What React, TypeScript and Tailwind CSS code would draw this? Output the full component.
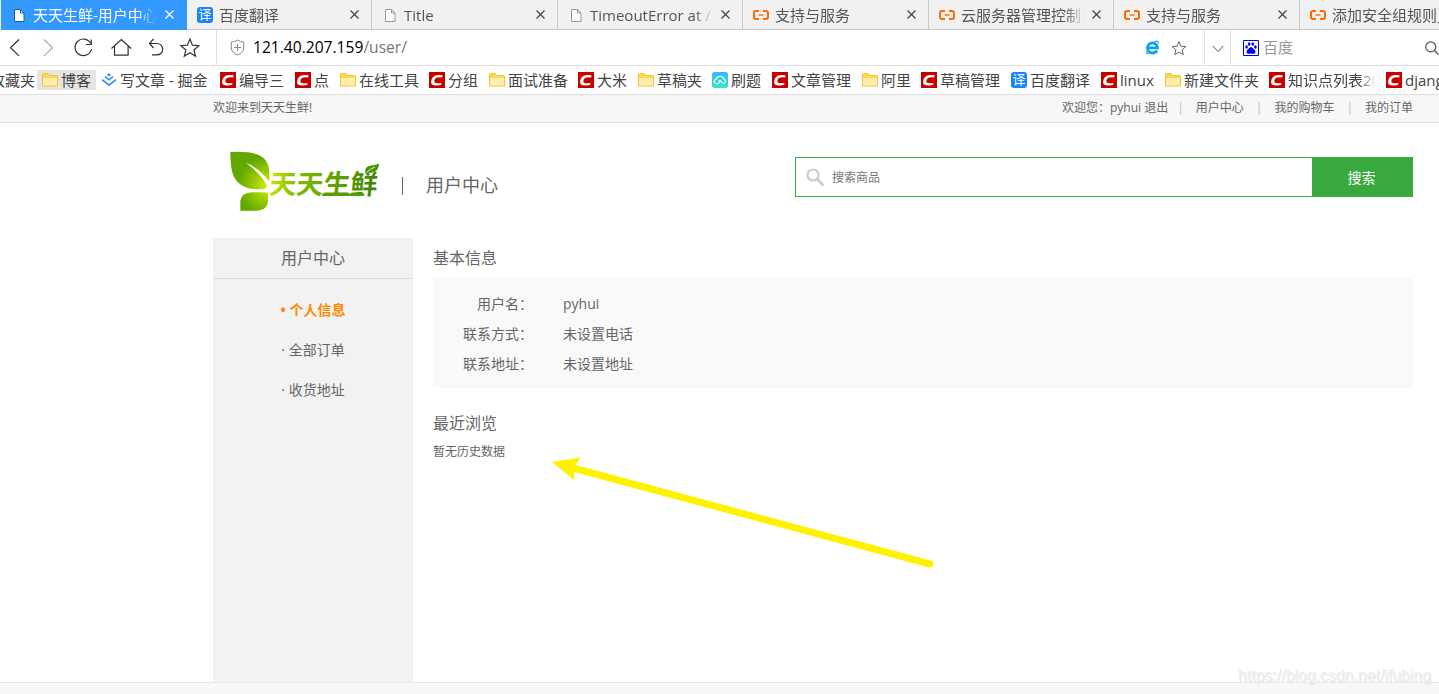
import type { ReactNode } from "react";
import clsx from "clsx";

const FileIcon = ({ active }: { active?: boolean }) => (
  <svg width="16" height="16" viewBox="0 0 16 16" className="shrink-0">
    <path
      d="M3.5 2.5h6l3.5 3.5v8.5h-9.5z"
      fill={active ? "#fff" : "#fafafa"}
      stroke={active ? "#1d5c9c" : "#999"}
    />
    <path d="M9.5 2.5v3.5h3.5" fill="none" stroke={active ? "#1d5c9c" : "#999"} />
  </svg>
);

const TranslateIcon = () => (
  <span className="w-4 h-4 shrink-0 rounded-[3px] bg-[#1a84fa] text-white text-[13px] leading-[15px] text-center overflow-hidden">
    译
  </span>
);

const CloudIcon = () => (
  <svg width="16" height="16" viewBox="0 0 16 16" fill="none" stroke="#ff6a00" className="shrink-0">
    <path d="M6 4H3.2Q1 4 1 6.2v3.6Q1 12 3.2 12H6M10 4h2.8Q15 4 15 6.2v3.6Q15 12 12.8 12H10" strokeWidth="2" />
    <path d="M5.5 8h5" strokeWidth="1.4" />
  </svg>
);

const FolderIcon = () => (
  <svg width="16" height="16" viewBox="0 0 16 16" className="shrink-0">
    <path d="M.5 14V2.5Q.5 1.5 1.5 1.5H6l1.5 2h7q1 0 1 1V14z" fill="#ffd84d" stroke="#f5c02c" />
    <path d="M1 6h14v7.5H1z" fill="#ffeeaf" />
  </svg>
);

const CsdnIcon = () => (
  <svg width="16" height="16" viewBox="0 0 16 16" className="shrink-0">
    <path d="M0 0h16v16H0z" fill="#c80000" />
    <path
      d="M13.6 3.2l-.5 2.300Q7.200 4.500 5.800 7.200 4.500 10.700 7 11q2.500.4 5.500-.1l-.5 2.200q-4 .6-6.800.2Q.8 12.500 2.600 7.200 4.500 1.800 13.600 3.200z"
      fill="#fff"
    />
  </svg>
);

const JuejinIcon = () => (
  <svg width="16" height="16" viewBox="0 0 16 16" fill="none" stroke="#2f8cf5" strokeWidth="1.5" className="shrink-0">
    <path d="M8 1.2l2 1.6-2 1.7-2-1.7z" fill="#2f8cf5" stroke="none" />
    <path d="M4 4.6l4 3.2 4-3.2M1 7.6l7 5.6 7-5.6" />
  </svg>
);

const ShuatiIcon = () => (
  <svg width="16" height="16" viewBox="0 0 16 16" className="shrink-0">
    <defs>
      <linearGradient id="shuati" x1="0" y1="0" x2="0" y2="1">
        <stop offset="0" stopColor="#36b8f8" />
        <stop offset="1" stopColor="#36e8c0" />
      </linearGradient>
    </defs>
    <rect width="16" height="16" rx="2.5" fill="url(#shuati)" />
    <path
      d="M7 11.500H4.500a2.200 2.200 0 01-.2-4.400 3.800 3.800 0 017.300-.2 2.400 2.400 0 01.2 4.600q-1.500 0-2.300-1.500-.8-1.700-1.800-1.300-1.400.7-.2 2.100"
      fill="none"
      stroke="#fff"
      strokeWidth="1.1"
    />
  </svg>
);

const BaiduIcon = () => (
  <svg width="16" height="16" viewBox="0 0 16 16" fill="#0000f0" className="shrink-0">
    <path d="M.5.5h15v15H.5z" fill="#fff" stroke="#0000f0" />
    <ellipse cx="3.6" cy="7" rx="1.3" ry="1.8" />
    <ellipse cx="6.2" cy="4.1" rx="1.3" ry="1.8" />
    <ellipse cx="9.8" cy="4.1" rx="1.3" ry="1.8" />
    <ellipse cx="12.4" cy="7" rx="1.3" ry="1.8" />
    <path d="M8 7q1.2 0 2.2 1.6 2.6 1.8 2.3 3.6-.5 2-2.6 1.5-1.9-.4-3.8 0-2.1.4-2.6-1.5-.3-1.8 2.3-3.6Q6.800 7 8 7z" />
  </svg>
);

const CloseIcon = ({ active }: { active?: boolean }) => (
  <svg width="9" height="9" viewBox="0 0 9 9" stroke={active ? "#fff" : "#444"} strokeWidth="1.2" className="shrink-0">
    <path d="M.5.5l8 8M8.500.5l-8 8" />
  </svg>
);

type TabProps = { icon: ReactNode; title: string; width: string; active?: boolean };

const Tab = ({ icon, title, width, active }: TabProps) => (
  <div
    className={clsx(
      "h-[30px] shrink-0 flex items-center pl-[10px] pr-[12px] text-[15px] border-r border-b",
      width,
      active ? "bg-[#3399ff] text-white border-[#3399ff]" : "text-[#555] border-[#c8c8c8]"
    )}
  >
    {icon}
    <span className="ml-[6px] w-[124px] overflow-hidden whitespace-nowrap leading-7 [mask-image:linear-gradient(to_right,#000_104px,transparent_124px)]">
      {title}
    </span>
    <span className="ml-auto">
      <CloseIcon active={active} />
    </span>
  </div>
);

const tabs: TabProps[] = [
  { icon: <FileIcon active />, title: "天天生鲜-用户中心", width: "w-[186px]", active: true },
  { icon: <TranslateIcon />, title: "百度翻译", width: "w-[185px]" },
  { icon: <FileIcon />, title: "Title", width: "w-[186px]" },
  { icon: <FileIcon />, title: "TimeoutError at /", width: "w-[185px]" },
  { icon: <CloudIcon />, title: "支持与服务", width: "w-[186px]" },
  { icon: <CloudIcon />, title: "云服务器管理控制台", width: "w-[185px]" },
  { icon: <CloudIcon />, title: "支持与服务", width: "w-[186px]" },
  { icon: <CloudIcon />, title: "添加安全组规则_", width: "w-[186px]" },
];

const bookmarks = [
  { icon: <FolderIcon />, title: "博客", width: "w-[59px]", active: true },
  { icon: <JuejinIcon />, title: "写文章 - 掘金", width: "w-[119px]" },
  { icon: <CsdnIcon />, title: "编导三", width: "w-[75px]" },
  { icon: <CsdnIcon />, title: "点", width: "w-[45px]" },
  { icon: <FolderIcon />, title: "在线工具", width: "w-[89px]" },
  { icon: <CsdnIcon />, title: "分组", width: "w-[60px]" },
  { icon: <FolderIcon />, title: "面试准备", width: "w-[89px]" },
  { icon: <CsdnIcon />, title: "大米", width: "w-[60px]" },
  { icon: <FolderIcon />, title: "草稿夹", width: "w-[74px]" },
  { icon: <ShuatiIcon />, title: "刷题", width: "w-[60px]" },
  { icon: <CsdnIcon />, title: "文章管理", width: "w-[90px]" },
  { icon: <FolderIcon />, title: "阿里", width: "w-[59px]" },
  { icon: <CsdnIcon />, title: "草稿管理", width: "w-[90px]" },
  { icon: <TranslateIcon />, title: "百度翻译", width: "w-[90px]" },
  { icon: <CsdnIcon />, title: "linux", width: "w-[64px]" },
  { icon: <FolderIcon />, title: "新建文件夹", width: "w-[104px]" },
  { icon: <CsdnIcon />, title: "知识点列表20", width: "w-[117px]", fade: true },
  { icon: <CsdnIcon />, title: "django", width: "w-[80px]" },
];

const Toolbar = () => (
  <div className="h-9 flex items-center bg-white border-b border-[#e0e0e0]">
    <div className="w-[217px] h-full shrink-0 border-r border-[#e0e0e0]">
      <svg width="216" height="35" viewBox="0 30 216 35" fill="none" stroke="#333" strokeWidth="1.2">
        <path d="M19 39.500l-8.500 8.200 8.500 8.200" />
        <path d="M44 39.500l8.500 8.200-8.500 8.200" stroke="#aaa" />
        <path d="M90.600 43.200a8.300 8.300 0 10.900 5.800M91.300 39.500v5h-5.500" />
        <path d="M111.500 48.500l9.800-9 9.800 9M114.500 46.500v8.700h13.600v-8.700" />
        <path d="M153.500 39l-4 4.500 4 4.500M149.500 43.500h7.500a5.700 5.700 0 010 11.400h-5" />
        <path d="M189.900 39l2.500 6.200 6.500.5-5 4.300 1.600 6.300-5.600-3.500-5.600 3.500 1.600-6.300-5-4.300 6.500-.5z" />
      </svg>
    </div>
    <div className="w-[987px] h-full flex items-center pl-[13px] pr-[17px]">
      <svg width="15" height="17" viewBox="0 0 15 17" fill="none" stroke="#888" className="shrink-0">
        <path d="M7.500 1q3 2 6.200 2v6q0 4.500-6.200 7-6.200-2.500-6.200-7v-6q3.200 0 6.200-2zM7.500 5v7M4 8.500h7" />
      </svg>
      <span className="ml-2 text-[15.6px] text-black">
        121.40.207.159<span className="text-[#777]">/user/</span>
      </span>
      <svg width="15" height="15" viewBox="0 0 15 15" fill="none" className="ml-auto">
        <path d="M4 7.800h8.500A5 5 0 107.500 13q3.200 0 4.500-2.600" stroke="#10a0f0" strokeWidth="2.8" />
        <path d="M9.500 1.800q4-1.800 4 1.400M2.500 10q-2 4 1 3.600" stroke="#10a0f0" strokeWidth="1.2" />
      </svg>
      <svg width="16" height="16" viewBox="0 0 16 16" fill="none" stroke="#666" strokeWidth="1" className="ml-[11px]">
        <path d="M8 1.500l1.900 4.700 4.900.4-3.700 3.200 1.200 4.900L8 12.100l-4.300 2.600 1.200-4.900-3.700-3.200 4.900-.4z" />
      </svg>
    </div>
    <div className="w-[27px] h-full flex items-center justify-center border-x border-[#e0e0e0]">
      <svg width="12" height="8" viewBox="0 0 12 8" fill="none" stroke="#555" className="mt-0.5">
        <path d="M.8 1L6 6.500 11.200 1" />
      </svg>
    </div>
    <div className="flex-1 h-full flex items-center pl-3">
      <BaiduIcon />
      <span className="ml-1 text-[15px] text-[#999]">百度</span>
      <svg width="14" height="14" viewBox="0 0 14 14" fill="none" stroke="#555" strokeWidth="1.2" className="ml-auto">
        <circle cx="5.8" cy="5.8" r="5" />
        <path d="M9.500 9.500l4 4" />
      </svg>
    </div>
  </div>
);

const Bookmarks = () => (
  <div className="h-[29px] flex items-center bg-white border-b border-[#e0e0e0] text-[15px] text-[#444] overflow-hidden">
    <span className="w-[37px] shrink-0 flex justify-end whitespace-nowrap pr-[2px]">收藏夹</span>
    {bookmarks.map((b, i) => (
      <div
        key={i}
        className={clsx("h-5 shrink-0 flex items-center gap-1 px-[5px] whitespace-nowrap", b.width, b.active && "bg-[#e5e5e5]")}
      >
        {b.icon}
        <span
          className={clsx(
            "leading-5 -ml-px",
            b.fade && "w-[88px] overflow-hidden [mask-image:linear-gradient(to_right,#000_72px,transparent_88px)]"
          )}
        >
          {b.title}
        </span>
      </div>
    ))}
  </div>
);

const Logo = () => (
  <svg width="152" height="62" viewBox="0 0 152 62">
    <defs>
      <radialGradient id="leaf" gradientUnits="userSpaceOnUse" cx="38" cy="35" r="30">
        <stop offset="0" stopColor="#dcf000" />
        <stop offset=".45" stopColor="#9ccf00" />
        <stop offset="1" stopColor="#62a800" />
      </radialGradient>
      <linearGradient id="word" gradientUnits="userSpaceOnUse" x1="40" y1="0" x2="150" y2="0">
        <stop offset="0" stopColor="#c4e400" />
        <stop offset=".25" stopColor="#7cbc00" />
        <stop offset="1" stopColor="#3c8200" />
      </linearGradient>
    </defs>
    <path
      d="M.3 1Q10 .5 18 1.300 35 3 38.500 15q1.200 6 .8 15.500Q30 17.500 15.500 11.500 28.500 20.500 37.300 34.500l-2.300 3.200Q24 39 17.500 37 8 33.500 4 26 .3 19 .3 1z"
      fill="url(#leaf)"
    />
    <path d="M37.700 41.500q1.300 12-2 14.500-3 4-11.500 3.800H10.300V50q1-8.500 12-8.800z" fill="url(#leaf)" />
    <text
      x="39"
      y="43"
      fontSize="27"
      fontWeight="700"
      textLength="108"
      lengthAdjust="spacingAndGlyphs"
      fill="url(#word)"
      transform="skewX(-6) translate(4 0)"
    >
      天天生鲜
    </text>
    <path d="M92.500 42.500h42l-.5 2.500H92z" fill="#569c00" />
    <path d="M135.300 21.700q-1-7 6.500-7.200l7.500-1.700q-1.500 9.500-9.500 9l-3.500 2z" fill="#4a9408" />
    <path d="M136.500 21.500q4-4 8.500-5.500" fill="none" stroke="#fff" strokeWidth=".8" />
  </svg>
);

const info = [
  { label: "用户名：", value: "pyhui" },
  { label: "联系方式：", value: "未设置电话" },
  { label: "联系地址：", value: "未设置地址" },
];

const Divider = () => <span className="text-[#bbb]">|</span>;

export default function App() {
  return (
    <div className="relative w-[1439px] h-[694px] overflow-hidden flex flex-col bg-white text-[#666] font-['Open_Sans','Noto_Sans_CJK_SC',sans-serif]">
      <div className="h-[30px] shrink-0 flex pl-px bg-[#f1f1f1] overflow-hidden">
        {tabs.map((tab, i) => (
          <Tab key={i} {...tab} />
        ))}
      </div>
      <Toolbar />
      <Bookmarks />

      <div className="h-7 shrink-0 flex justify-between items-center pl-[213px] pr-[26px] pb-0.5 bg-[#f7f7f7] border-b border-[#ddd] text-xs whitespace-nowrap">
        <span>欢迎来到天天生鲜!</span>
        <div className="flex">
          <span className="mr-[9px]">欢迎您：pyhui 退出</span>
          <Divider />
          <span className="mx-3">用户中心</span>
          <Divider />
          <span className="mx-3">我的购物车</span>
          <Divider />
          <span className="ml-3">我的订单</span>
        </div>
      </div>

      <header className="h-[115px] shrink-0 flex items-start pl-[230px] pr-[26px] pt-7">
        <Logo />
        <div className="mt-[21px] ml-[20px] flex items-center text-lg leading-5 whitespace-nowrap">
          <span className="w-px h-[18px] mt-1 bg-[#666]" />
          <span className="ml-[23px] mt-[3px]">用户中心</span>
        </div>
        <div className="ml-auto mt-[6px] w-[618px] h-10 flex">
          <div className="flex-1 flex items-center border border-r-0 border-[#38aa3f] pl-2.5 text-xs text-[#757575]">
            <svg width="19" height="19" viewBox="0 0 19 19" fill="none" stroke="#ccc">
              <circle cx="7" cy="7" r="5.5" strokeWidth="2.2" />
              <path d="M11.500 11.500l6 6" strokeWidth="2.8" />
            </svg>
            <span className="ml-[7px] mt-0.5">搜索商品</span>
          </div>
          <button className="w-[101px] pr-[2px] pt-0.5 bg-[#38aa3f] text-white text-sm">搜索</button>
        </div>
      </header>

      <main className="h-[444px] shrink-0 flex pl-[213px] pr-[26px]">
        <aside className="w-[200px] bg-[#f2f2f2] text-sm">
          <h3 className="h-[41px] leading-[40px] text-center text-base border-b border-[#ddd]">用户中心</h3>
          <ul className="mt-[11px] text-center leading-10">
            <li className="text-[#ff8800] font-bold">• 个人信息</li>
            <li>· 全部订单</li>
            <li>· 收货地址</li>
          </ul>
        </aside>
        <section className="ml-5 flex-1">
          <h3 className="h-10 leading-10 text-base">基本信息</h3>
          <ul className="h-[110px] bg-[#f9f9f9] pt-[11px] text-sm">
            {info.map((row) => (
              <li key={row.label} className="h-[30px] leading-[30px] flex">
                <span className="w-[100px] text-right">{row.label}</span>
                <span className="ml-[30px]">{row.value}</span>
              </li>
            ))}
          </ul>
          <h3 className="mt-[15px] h-10 leading-10 text-base">最近浏览</h3>
          <p className="mt-px text-xs leading-4">暂无历史数据</p>
        </section>
      </main>

      <footer className="flex-1 bg-[#f8f8f8] border-t border-[#e8e8e8]" />

      <svg width="390" height="120" viewBox="548 452 390 120" className="absolute left-[548px] top-[452px]">
        <path d="M573 468l357 96" stroke="#fff200" strokeWidth="7" strokeLinecap="round" />
        <path d="M552 462l28.500-4.500-6 9-.5 13.500z" fill="#fff200" />
      </svg>
      <span className="absolute right-2 bottom-2 text-[15.85px] leading-5 text-[#f0f0f0] [text-shadow:1px_1px_1px_#e2e2e2] font-['Liberation_Sans',sans-serif]">
        https://blog.csdn.net/ifubing
      </span>
    </div>
  );
}
